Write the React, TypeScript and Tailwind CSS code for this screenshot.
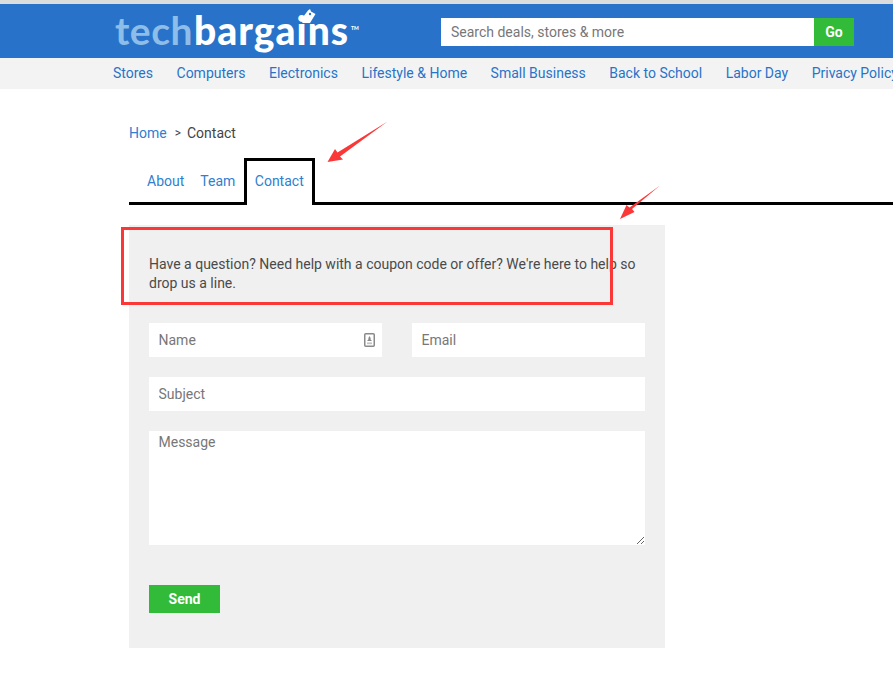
const navItems = [
  'Stores',
  'Computers',
  'Electronics',
  'Lifestyle & Home',
  'Small Business',
  'Back to School',
  'Labor Day',
  'Privacy Policy'
]

function Logo() {
  return (
    <div className="relative flex items-baseline font-['Lato',sans-serif] text-[39px] leading-[46px] font-black">
      <span className="font-bold tracking-[0.5px] text-[#8dbde8]">tech</span>
      <span className="ml-[1px] tracking-[1px] text-white">bargains</span>
      <span className="ml-[2px] self-start mt-[19px] text-[5px] leading-[5px] text-white">TM</span>
      {/* price tag sitting on the i */}
      <svg className="absolute left-[186px] top-[2px] h-[15px] w-[15px]" viewBox="0 0 15 15" aria-hidden="true">
        <path d="M0.5 10 L7 1.5 L9 0 L10 2.5 L14.5 5 L9 14 H1.5 Z" fill="#fff" />
        <circle cx="9" cy="5" r="1.2" fill="#2873c9" />
      </svg>
    </div>
  )
}

function Header() {
  return (
    <header>
      <div className="h-[4px] bg-[#dcdcdc]" />
      <div className="flex h-[54px] bg-[#2873c9] pl-[115px]">
        <div className="w-[326px] pt-[3px]">
          <Logo />
        </div>
        <div className="mt-[14px] flex h-[28px] w-[413px]">
          <input
            className="h-full w-[373px] bg-white px-[10px] font-['Roboto',sans-serif] text-[14px] text-[#333] placeholder:text-[#777] outline-none"
            placeholder="Search deals, stores & more"
          />
          <button className="h-full w-[40px] bg-[#31bb38] font-['Roboto',sans-serif] text-[14px] font-bold text-white">
            Go
          </button>
        </div>
      </div>
      <nav className="flex h-[31px] items-center gap-[23.5px] overflow-hidden whitespace-nowrap bg-[#f3f3f3] pl-[113px] pb-[1px] text-[14px] text-[#2873c9]">
        {navItems.map((item) => (
          <a key={item} href="#" className="shrink-0">
            {item}
          </a>
        ))}
      </nav>
    </header>
  )
}

function Tabs() {
  return (
    <div className="mt-[16px] flex h-[46px] items-end border-b-[3px] border-black pl-[18px] text-[14px] text-[#2f80d0]">
      <a href="#" className="pb-[11px] leading-[20px]">About</a>
      <a href="#" className="ml-[16px] pb-[11px] leading-[20px]">Team</a>
      <a
        href="#"
        className="relative ml-[9px] -mb-[3px] h-[47px] rounded-b-[2px] border-x-[3px] border-t-[3px] border-black bg-white pl-[7.5px] pr-[8.5px] pt-[10px] leading-[20px]"
      >
        Contact
      </a>
    </div>
  )
}

function ContactForm() {
  const field = "h-[34px] bg-white px-[9.5px] text-[14px] text-[#333] placeholder:text-[#777] outline-none"
  return (
    <form className="mt-[20px] w-[536px] bg-[#f0f0f0] px-[20px] pt-[30px] pb-[35px]">
      <p className="text-[14px] leading-[19px] text-[#4a4a4a]">
        Have a question? Need help with a coupon code or offer? We're here to help so drop us a line.
      </p>
      <div className="mt-[30px] flex justify-between">
        <div className="relative w-[233px]">
          <input className={`${field} w-full`} placeholder="Name" />
          <svg className="absolute right-[7px] top-[10px] h-[14px] w-[11px]" viewBox="0 0 11 14" aria-hidden="true">
            <rect x="0.75" y="0.75" width="9.5" height="12.5" rx="1" fill="#fff" stroke="#8a8a8a" strokeWidth="1.5" />
            <path d="M5.5 3 L6.6 5 V6.5 L8 8 H3 L4.4 6.5 V5 Z" fill="#8a8a8a" />
            <rect x="3" y="9.4" width="5" height="1.8" fill="#c4c4c4" />
          </svg>
        </div>
        <input className={`${field} w-[233px]`} placeholder="Email" />
      </div>
      <input className={`${field} mt-[20px] block w-full`} placeholder="Subject" />
      <textarea
        className="mt-[20px] block h-[114px] w-full bg-white px-[9.5px] py-[2px] text-[14px] leading-[18px] text-[#333] placeholder:text-[#777] outline-none"
        placeholder="Message"
      />
      <button className="mt-[40px] block h-[28px] w-[71px] bg-[#31bb38] text-[14px] font-bold text-white">
        Send
      </button>
    </form>
  )
}

function Annotations() {
  return (
    <>
      <div className="absolute left-[121px] top-[227px] h-[78px] w-[492px] border-[3px] border-[#fb3838]" />
      <svg className="absolute left-0 top-0 h-[683px] w-[893px]" viewBox="0 0 893 683" aria-hidden="true">
        <path d="M387.5 121.5 L340 156.5 L343 159.5 L327.5 162 L335 149 L337.5 152.5 Z" fill="#fb3838" />
        <path d="M660 185.5 L632 209 L634.5 212 L620 219 L626.5 205 L629.5 207.5 Z" fill="#fb3838" />
      </svg>
    </>
  )
}

export default function App() {
  return (
    <div className="relative h-[683px] w-[893px] overflow-hidden bg-white font-['Roboto',sans-serif]">
      <Header />
      <main className="pl-[129px] pt-[34px]">
        <div className="flex h-[20px] items-center text-[14px] text-[#444]">
          <a href="#" className="text-[#2f80d0]">Home</a>
          <span className="ml-[8px] text-[12px]">&gt;</span>
          <span className="ml-[6px]">Contact</span>
        </div>
        <Tabs />
        <ContactForm />
      </main>
      <Annotations />
    </div>
  )
}
